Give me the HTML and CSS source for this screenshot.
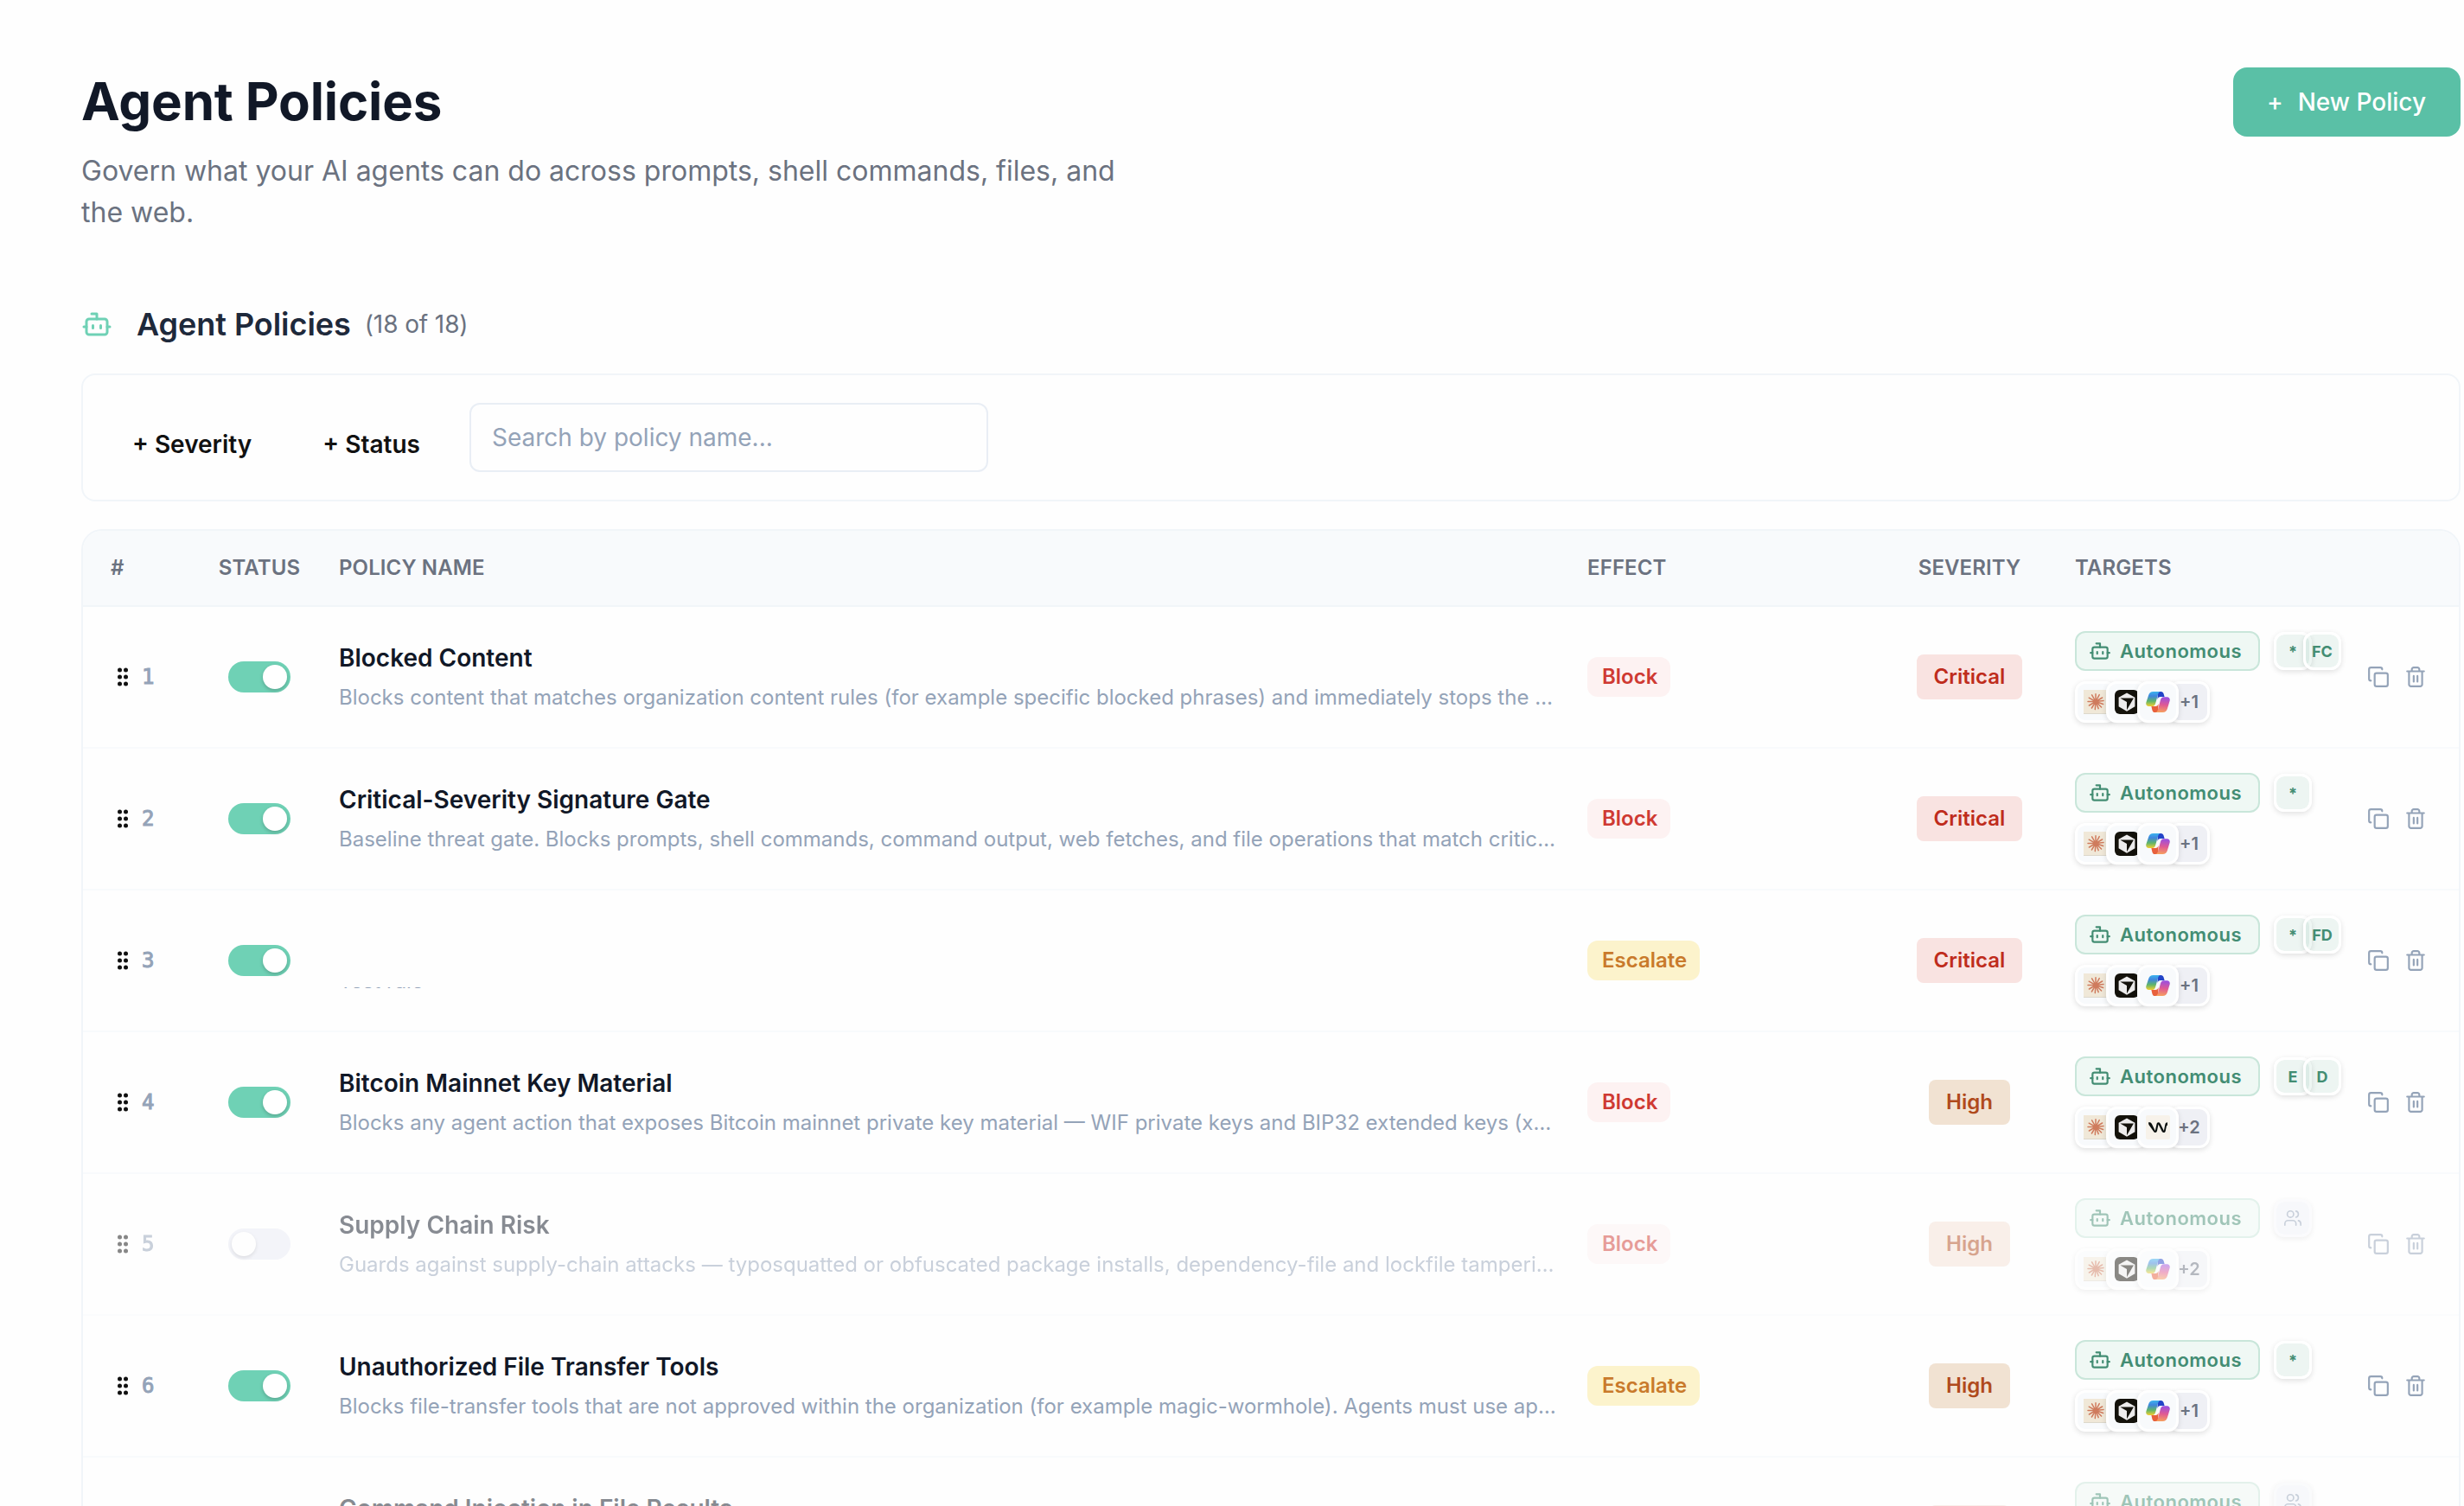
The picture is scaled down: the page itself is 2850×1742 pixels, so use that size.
FILE: index.html
```html
<!DOCTYPE html>
<html lang="en">

<head>
    <meta charset="UTF-8">
    <meta name="viewport" content="width=device-width, initial-scale=1.0">
    <title>Agent Policies</title>
    <link rel="stylesheet" href="styles.css">
</head>

<body>
    <!-- Shared icons -->
    <svg class="sprite" xmlns="http://www.w3.org/2000/svg">
        <defs>
            <linearGradient id="copilotLeft" x1="0" y1="0" x2="0" y2="1">
                <stop offset="0" stop-color="#3bb4ee" />
                <stop offset="0.3" stop-color="#3f86de" />
                <stop offset="0.65" stop-color="#5fb56b" />
                <stop offset="1" stop-color="#f4cf2f" />
            </linearGradient>
            <linearGradient id="copilotRight" x1="0.4" y1="0" x2="0.3" y2="1">
                <stop offset="0" stop-color="#9a4fe0" />
                <stop offset="0.5" stop-color="#e05a93" />
                <stop offset="1" stop-color="#f7a25c" />
            </linearGradient>
        </defs>
        <symbol id="bot" viewBox="0 0 24 24">
            <path d="M12 8V4H8" />
            <rect width="16" height="12" x="4" y="8" rx="2" />
            <path d="M2 14h2M20 14h2M15 13v2M9 13v2" />
        </symbol>
        <symbol id="copy" viewBox="0 0 24 24">
            <rect width="14" height="14" x="8" y="8" rx="2" />
            <path d="M4 16c-1.1 0-2-.9-2-2V4c0-1.1.9-2 2-2h10c1.1 0 2 .9 2 2" />
        </symbol>
        <symbol id="trash" viewBox="0 0 24 24">
            <path d="M3 6h18M19 6v14c0 1-1 2-2 2H7c-1 0-2-1-2-2V6M8 6V4c0-1 1-2 2-2h4c1 0 2 1 2 2v2M10 11v6M14 11v6" />
        </symbol>
        <symbol id="users" viewBox="0 0 24 24">
            <path d="M16 21v-2a4 4 0 0 0-4-4H6a4 4 0 0 0-4 4v2M22 21v-2a4 4 0 0 0-3-3.87M16 3.13a4 4 0 0 1 0 7.75" />
            <circle cx="9" cy="7" r="4" />
        </symbol>
        <symbol id="grip" viewBox="0 0 14 22">
            <circle cx="3.5" cy="3" r="2.5" /><circle cx="10.5" cy="3" r="2.5" />
            <circle cx="3.5" cy="11" r="2.5" /><circle cx="10.5" cy="11" r="2.5" />
            <circle cx="3.5" cy="19" r="2.5" /><circle cx="10.5" cy="19" r="2.5" />
        </symbol>
        <symbol id="claude" viewBox="0 0 28 28">
            <rect width="28" height="28" fill="#f0e8d8" />
            <path d="M0 27.5h28" stroke="#dcd8cc" />
            <path d="M14 13.5L14 4.8M14 13.5L18.2 5.6M14 13.5L21.6 9M14 13.5L23 12.6M14 13.5L22.6 16.5M14 13.5L20.6 20M14 13.5L17.2 21.6M14 13.5L13.3 22.6M14 13.5L9.4 21M14 13.5L6.4 18M14 13.5L5 13.4M14 13.5L6.2 9.2M14 13.5L9.6 5.8" stroke="#cf7b5d" stroke-width="1.5" stroke-linecap="round" />
        </symbol>
        <symbol id="cursor" viewBox="0 0 28 28">
            <rect width="28" height="28" rx="6" fill="#14120b" />
            <path d="M14 3.4L23.4 8.7v10.6L14 24.8 4.6 19.3V8.700z" fill="#edecec" />
            <path d="M6.3 9.6h15.600L14 23.200v-9.200z" fill="#14120b" />
        </symbol>
        <symbol id="copilot" viewBox="0 0 28 28">
            <path d="M14 2h3.4c1.8 0 2.7 1 3.2 2.6L21.6 8H17c-2 0-3 1-3.6 3z" fill="#2244c8" />
            <path d="M14 26h-3.4c-1.8 0-2.7-1-3.2-2.6L6.400 19H11c2 0 3-1 3.600-3z" fill="#e8603c" />
            <path d="M8.500 2H17c-1.500 0-2.300 1.200-2.800 2.800L11 16c-.6 2-1.600 3-3.600 3H3.500C.8 19-.2 17 .4 14.500L3.200 6C4 3.300 5.800 2 8.500 2z" fill="url(#copilotLeft)" />
            <path d="M19.500 26H11c1.500 0 2.300-1.200 2.800-2.800L17 11.500c.6-2 1.600-3.300 3.600-3.300h3.900c2.700 0 3.700 2 3.100 4.500L24.800 22c-.8 2.700-2.600 4-5.300 4z" fill="url(#copilotRight)" />
        </symbol>
        <symbol id="windsurf" viewBox="0 0 28 28">
            <rect width="28" height="28" rx="2" fill="#f7f2ea" />
            <path d="M3 8.200h1.200c1.300 0 2 .5 2.700 1.900L10.800 18l1.700-7.800c.3-1.300.9-2 2-2s1.700.6 2.400 1.900l4 7.900 1.400-7.300c.3-1.600 1-2.500 2.700-2.500v3.500c-.7.100-1 .4-1.200 1.300l-1 5c-.3 1.400-.9 2-2 2s-1.800-.6-2.400-1.800l-3.900-7.600-1.500 7.400c-.3 1.300-.9 2-2 2s-1.700-.6-2.400-1.800L3.600 11.300C3.200 10.400 3 9.500 3 8.200z" fill="#0b100f" />
        </symbol>
    </svg>

    <div class="page">
        <div class="page-header">
            <div>
                <h1>Agent Policies</h1>
                <p class="subtitle">Govern what your AI agents can do across prompts, shell commands, files, and the web.</p>
            </div>
            <button class="new-policy"><span>+</span><span>New Policy</span></button>
        </div>

        <div class="section-title">
            <svg class="icon section-icon"><use href="#bot" /></svg>
            <h2>Agent Policies</h2>
            <span class="count">(18 of 18)</span>
        </div>

        <div class="filters">
            <button class="filter">+ Severity</button>
            <button class="filter">+ Status</button>
            <input class="search" type="text" placeholder="Search by policy name...">
        </div>

        <div class="table">
            <div class="row head">
                <div>#</div>
                <div class="status">STATUS</div>
                <div>POLICY NAME</div>
                <div>EFFECT</div>
                <div class="center">SEVERITY</div>
                <div>TARGETS</div>
                <div></div>
            </div>
            <div id="rows"></div>
        </div>
    </div>

    <script src="script.js"></script>
</body>

</html>
```

FILE: styles.css
```css
* {
    box-sizing: border-box;
    margin: 0;
    padding: 0;
}

body {
    width: 2850px;
    height: 1742px;
    overflow: hidden;
    background-color: #fefefe;
    font-family: 'Inter', sans-serif;
    color: #111;
}

button,
input {
    font-family: inherit;
    border: none;
    background: none;
}

.sprite {
    position: absolute;
    width: 0;
    height: 0;
}

.icon {
    display: block;
    fill: none;
    stroke: currentColor;
    stroke-width: 2;
    stroke-linecap: round;
    stroke-linejoin: round;
    flex-shrink: 0;
}

.page {
    padding: 78px 4px 0 94px;
}

.page-header {
    display: flex;
    justify-content: space-between;
    align-items: flex-start;
    height: 256px;
}

h1 {
    font-size: 60px;
    line-height: 78px;
    font-weight: 700;
    letter-spacing: -0.14px;
    color: #111827;
}

.subtitle {
    width: 1240px;
    margin-top: 18px;
    font-size: 32px;
    line-height: 48px;
    color: #6b7280;
}

.new-policy {
    display: flex;
    align-items: center;
    justify-content: center;
    gap: 17px;
    width: 263px;
    height: 80px;
    padding-right: 1px;
    border-radius: 16px;
    background-color: #5ac0a6;
    color: #fff;
    font-size: 28px;
    font-weight: 500;
}

.section-title {
    display: flex;
    align-items: center;
    height: 82px;
    margin-bottom: 16px;
}

.section-icon {
    width: 36px;
    height: 36px;
    margin-right: 28px;
    color: #6fd1b5;
}

h2 {
    font-size: 36px;
    font-weight: 600;
    letter-spacing: -0.05px;
    color: #1e293b;
}

.count {
    margin-left: 16px;
    font-size: 28px;
    letter-spacing: -0.1px;
    color: #6b7280;
}

.filters {
    display: flex;
    height: 148px;
    padding: 32px 57px;
    border: 2px solid #f1f5f9;
    border-radius: 16px;
}

.filter {
    height: 80px;
    margin-top: 8px;
    margin-right: 82px;
    font-size: 28px;
    font-weight: 600;
    color: #111;
}

.search {
    width: 600px;
    height: 80px;
    margin-left: -25px;
    padding: 0 24px;
    border: 2px solid #e9eef5;
    border-radius: 12px;
    font-size: 28px;
}

.search::placeholder {
    color: #94a3b8;
}

.table {
    margin-top: 32px;
    border: 2px solid #f1f5f9;
    border-radius: 24px;
    overflow: hidden;
}

.row {
    display: grid;
    grid-template-columns: 104px 160px 1444px 320px 244px 314px 130px;
    align-items: center;
    height: 164px;
    padding-left: 32px;
    border-bottom: 2px solid #f8fafc;
}

.head {
    height: 88px;
    padding-bottom: 1px;
    background-color: #f8fafc;
    border-bottom-color: #f1f5f9;
    font-size: 24px;
    font-weight: 600;
    letter-spacing: 0.12px;
    color: #6b7280;
}

.center {
    text-align: center;
}

.status {
    padding-right: 24px;
    text-align: center;
}

.off {
    opacity: 0.5;
}

.order {
    display: flex;
    align-items: center;
    gap: 15px;
    padding-left: 7px;
    font-family: 'DejaVu Sans Mono', monospace;
    font-size: 24px;
    -webkit-text-stroke: 1px #94a3b8;
    color: #94a3b8;
}

.grip {
    width: 14px;
    height: 22px;
    fill: #111;
    stroke: none;
}

.toggle {
    width: 72px;
    height: 36px;
    margin: 0 auto;
    padding: 4px;
    border-radius: 18px;
    background-color: #6fd1b5;
}

.toggle::after {
    content: "";
    display: block;
    width: 28px;
    height: 28px;
    margin-left: 36px;
    border-radius: 50%;
    background-color: #fff;
    box-shadow: 0 2px 4px rgba(0, 0, 0, 0.2);
}

.off .toggle {
    background-color: #e9ebf5;
}

.off .toggle::after {
    margin-left: 0;
}

.name {
    height: 44px;
    font-size: 28px;
    line-height: 44px;
    font-weight: 600;
    color: #111827;
}

.desc {
    width: 1408px;
    height: 40px;
    margin-top: 4px;
    font-size: 24px;
    line-height: 40px;
    color: #94a3b8;
    white-space: nowrap;
    overflow: hidden;
    text-overflow: ellipsis;
}

/* Redacted row, only the foot of the text stays visible */
.redacted .desc {
    clip-path: inset(27px 0 11px 0);
}

.effect,
.severity {
    display: inline-block;
    font-size: 24px;
    font-weight: 600;
}

.effect {
    padding: 0 15px 0 17px;
    line-height: 46px;
    border-radius: 12px;
}

.severity {
    padding: 0 20px;
    line-height: 52px;
    border-radius: 8px;
}

.block {
    background-color: #fdf2f2;
    color: #cf3a33;
}

.escalate {
    background-color: #fcf3cc;
    color: #c97a2b;
}

.critical {
    background-color: #f9e3e1;
    color: #bf2c1c;
}

.high {
    background-color: #f1e2d2;
    color: #b04a1c;
}

.off .high {
    background-color: #f4e0d5;
}

.targets {
    display: flex;
    flex-wrap: wrap;
    align-items: center;
    gap: 12px 16px;
}

.mode {
    display: flex;
    align-items: center;
    gap: 10px;
    width: 214px;
    height: 46px;
    padding-left: 14px;
    border: 2px solid #c9e6da;
    border-radius: 12px;
    background-color: #eff8f4;
    font-size: 22px;
    font-weight: 600;
    letter-spacing: 0.5px;
    color: #438d73;
}

.mode .icon {
    width: 26px;
    height: 26px;
}

.stack {
    display: flex;
}

.scope,
.tool {
    display: flex;
    align-items: center;
    justify-content: center;
    border: 3px solid #fff;
    border-radius: 12px;
    box-shadow: 0 2px 6px rgba(0, 0, 0, 0.12);
}

.scope {
    width: 44px;
    height: 44px;
    background-color: rgba(67, 160, 125, 0.09);
    background-clip: padding-box;
    font-size: 18px;
    font-weight: 700;
    color: #438d73;
}

.scope + .scope {
    margin-left: -10px;
}

.scope .icon {
    width: 22px;
    height: 22px;
    stroke-width: 1.8;
}

.scope.everyone {
    border-color: #f8f9fc;
    background-color: #f1f3f9;
    color: #94a3b8;
}

.tool {
    position: relative;
    width: 48px;
    height: 48px;
    background-color: #f8fafc;
}

.tool + .tool {
    margin-left: -12px;
}

.tool svg {
    width: 28px;
    height: 28px;
}

.tool.more {
    z-index: 0;
    background-color: #eff0f5;
    font-size: 20px;
    font-weight: 600;
    color: #6b7280;
}

.tool:not(.more) {
    z-index: 1;
}

.actions {
    display: flex;
    gap: 17px;
    padding-left: 24px;
    color: #94a3b8;
}

.actions .icon {
    width: 26px;
    height: 26px;
}
```

FILE: script.js
```js
var policies = [
    { name: 'Blocked Content', desc: 'Blocks content that matches organization content rules (for example specific blocked phrases) and immediately stops the agent.', effect: 'Block', severity: 'Critical', scopes: ['*', 'FC'], tools: ['claude', 'cursor', 'copilot'], more: 1, on: true },
    { name: 'Critical-Severity Signature Gate', desc: 'Baseline threat gate. Blocks prompts, shell commands, command output, web fetches, and file operations that match critical signatures.', effect: 'Block', severity: 'Critical', scopes: ['*'], tools: ['claude', 'cursor', 'copilot'], more: 1, on: true },
    { name: '', desc: 'Test rule', redacted: true, effect: 'Escalate', severity: 'Critical', scopes: ['*', 'FD'], tools: ['claude', 'cursor', 'copilot'], more: 1, on: true },
    { name: 'Bitcoin Mainnet Key Material', desc: 'Blocks any agent action that exposes Bitcoin mainnet private key material — WIF private keys and BIP32 extended keys (xprv).', effect: 'Block', severity: 'High', scopes: ['E', 'D'], tools: ['claude', 'cursor', 'windsurf'], more: 2, on: true },
    { name: 'Supply Chain Risk', desc: 'Guards against supply-chain attacks — typosquatted or obfuscated package installs, dependency-file and lockfile tampering.', effect: 'Block', severity: 'High', scopes: [], tools: ['claude', 'cursor', 'copilot'], more: 2, on: false },
    { name: 'Unauthorized File Transfer Tools', desc: 'Blocks file-transfer tools that are not approved within the organization (for example magic-wormhole). Agents must use approved tools.', effect: 'Escalate', severity: 'High', scopes: ['*'], tools: ['claude', 'cursor', 'copilot'], more: 1, on: true },
    { name: 'Command Injection in File Results', desc: '', effect: 'Block', severity: 'High', scopes: [], tools: ['claude', 'cursor', 'copilot'], more: 2, on: false }
];

function icon(id) {
    return `<svg class="icon"><use href="#${id}" /></svg>`;
}

// Build the scope chips, or the everyone icon when no scope is set
function scopeChips(scopes) {
    if (scopes.length === 0) {
        return `<div class="scope everyone">${icon('users')}</div>`;
    }
    return scopes.map(s => `<div class="scope">${s}</div>`).join('');
}

function policyRow(p, i) {
    var tools = p.tools.map(t => `<div class="tool"><svg><use href="#${t}" /></svg></div>`).join('');
    return `
        <div class="row ${p.on ? '' : 'off'} ${p.redacted ? 'redacted' : ''}">
            <div class="order"><svg class="grip"><use href="#grip" /></svg>${i + 1}</div>
            <div class="status"><div class="toggle"></div></div>
            <div>
                <div class="name">${p.name}</div>
                <div class="desc">${p.desc}</div>
            </div>
            <div><span class="effect ${p.effect.toLowerCase()}">${p.effect}</span></div>
            <div class="center"><span class="severity ${p.severity.toLowerCase()}">${p.severity}</span></div>
            <div class="targets">
                <div class="mode">${icon('bot')}Autonomous</div>
                <div class="stack">${scopeChips(p.scopes)}</div>
                <div class="stack">${tools}<div class="tool more">+${p.more}</div></div>
            </div>
            <div class="actions">${icon('copy')}${icon('trash')}</div>
        </div>`;
}

document.getElementById('rows').innerHTML = policies.map(policyRow).join('');
```
